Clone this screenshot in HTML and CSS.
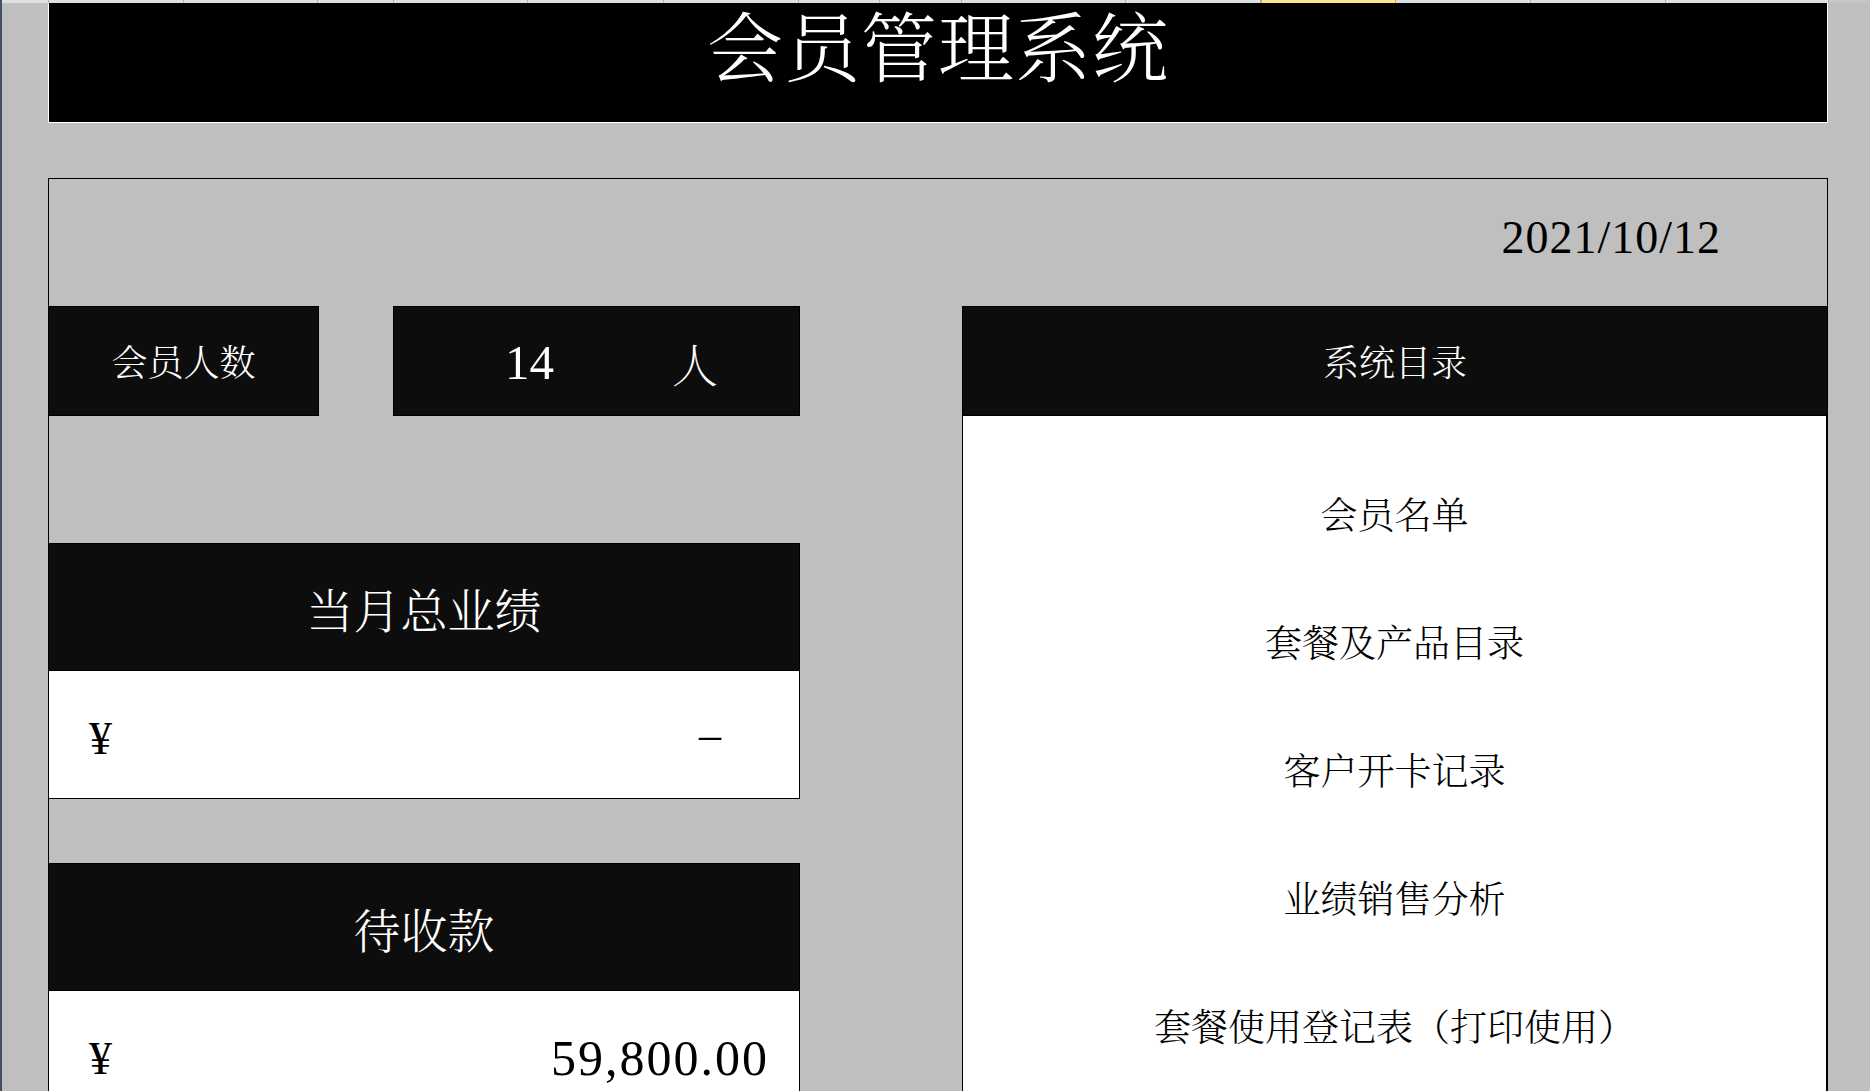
FILE: index.html
```html
<!DOCTYPE html>
<html lang="zh-CN">
<head>
    <meta charset="UTF-8">
    <title>会员管理系统</title>
    <link rel="stylesheet" href="styles.css">
</head>
<body>
<div class="sheet">
    <div class="colheads">
        <span class="c0"></span>
        <span class="c1"></span>
        <span class="c2"></span>
        <span class="c3"></span>
        <span class="c4"></span>
        <span class="c5"></span>
        <span class="c6"></span>
        <span class="c7"></span>
        <span class="c8"></span>
        <span class="c9"></span>
        <span class="c10"></span>
        <span class="c11 on"></span>
        <span class="c12"></span>
        <span class="c13"></span>
        <span class="c14"></span>
        <span class="c15"></span>
    </div>
    <div class="main">
        <div class="title">会员管理系统</div>
        <div class="board">
            <div class="date">2021/10/12</div>
            <div class="cols">
                <div class="left">
                    <div class="stats">
                        <div class="label">会员人数</div>
                        <div class="count"><span class="num">14</span><span class="unit">人</span></div>
                    </div>
                    <div class="card">
                        <div class="cardhead">当月总业绩</div>
                        <div class="cardval"><span class="yen">¥</span><span class="zero">–</span></div>
                    </div>
                    <div class="card second">
                        <div class="cardhead">待收款</div>
                        <div class="cardval"><span class="yen">¥</span><span class="money">59,800.00</span></div>
                    </div>
                </div>
                <div class="right">
                    <div class="menuhead">系统目录</div>
                    <ul class="menu">
                        <li>会员名单</li>
                        <li>套餐及产品目录</li>
                        <li>客户开卡记录</li>
                        <li>业绩销售分析</li>
                        <li>套餐使用登记表（打印使用）</li>
                    </ul>
                </div>
            </div>
        </div>
    </div>
</div>
</body>
</html>
```

FILE: styles.css
```css
* {
    box-sizing: border-box;
}

html, body {
    margin: 0;
    padding: 0;
    height: 100%;
    overflow: hidden;
}

body {
    background: #bfbfbf;
    font-family: "Liberation Serif", "Noto Serif CJK SC", "Noto Sans CJK SC", serif;
    font-weight: 300;
}

.sheet {
    height: 100%;
    border-left: 2px solid #44505f;
}

/* excel column header strip, mostly scrolled away */
.colheads {
    display: flex;
    height: 3px;
}
.colheads span {
    height: 3px;
    background: #dde1e7;
    border-right: 1px solid #a9b0ba;
}
.colheads .on {
    background: #fde58a;
    border-left: 1px solid #e3a53a;
    border-right: 1px solid #e3a53a;
}
.c0 { width: 47px; }
.c1 { width: 135px; }
.c2 { width: 134px; }
.c3 { width: 76px; }
.c4 { width: 134px; }
.c5 { width: 136px; }
.c6 { width: 135px; }
.c7 { width: 81px; }
.c8 { width: 82px; }
.c9 { width: 164px; }
.c10 { width: 135px; }
.c11 { width: 135px; }
.c12 { width: 135px; }
.c13 { width: 135px; }
.c14 { width: 163px; }
.c15 { flex-grow: 1; background: #c6c6c6 !important; border: none !important; }

.main {
    padding: 0 42px 0 46px;
}

.title {
    height: 120px;
    background: #000;
    border: 1px solid #fff;
    border-top: none;
    color: #fff;
    text-align: center;
    font-size: 76px;
    line-height: 90px;
    padding-top: 2px;
    letter-spacing: 1px;
}

.board {
    margin-top: 55px;
    border: 1px solid #000;
    border-bottom: none;
    height: 1000px;
}

.date {
    height: 127px;
    line-height: 118px;
    text-align: right;
    padding-right: 106px;
    font-size: 46px;
    letter-spacing: 1px;
    color: #000;
}

.cols {
    display: flex;
    justify-content: space-between;
    margin: 0 -1px;
}

.left {
    width: 752px;
}

.right {
    width: 866px;
}

.stats {
    display: flex;
    height: 110px;
}

.label {
    width: 271px;
    margin-right: 74px;
    background: #0d0d0d;
    border: 1px solid #000;
    color: #fff;
    font-size: 36px;
    line-height: 108px;
    padding-top: 3px;
    text-align: center;
}

.count {
    flex-grow: 1;
    display: flex;
    align-items: center;
    background: #0d0d0d;
    border: 1px solid #000;
    color: #fff;
    padding-top: 2px;
}
.count .num {
    width: 271px;
    text-align: center;
    font-size: 49px;
}
.count .unit {
    margin-left: 7px;
    font-size: 46px;
    font-weight: 200;
}

.card {
    margin-top: 127px;
}
.card.second {
    margin-top: 64px;
}

.cardhead {
    height: 128px;
    background: #0d0d0d;
    border: 1px solid #000;
    color: #fff;
    font-size: 47px;
    line-height: 126px;
    padding-top: 5px;
    text-align: center;
}

.cardval {
    height: 128px;
    display: flex;
    justify-content: space-between;
    align-items: center;
    background: #fff;
    border: 1px solid #000;
    border-top: none;
    padding: 7px 30px 0 40px;
    color: #000;
}
.cardval .yen {
    font-size: 46px;
}
.cardval .zero {
    font-size: 44px;
    margin: 0 48px 8px 0;
}
.cardval .money {
    font-size: 50px;
    letter-spacing: 2px;
}

.menuhead {
    height: 110px;
    background: #0d0d0d;
    border: 1px solid #000;
    color: #fff;
    font-size: 36px;
    line-height: 108px;
    padding-top: 3px;
    text-align: center;
}

.menu {
    list-style: none;
    margin: 0;
    padding: 37px 0 80px;
    background: #fff;
    border: 1px solid #000;
    border-top: none;
    border-right: 2px solid #000;
}
.menu li {
    height: 128px;
    line-height: 128px;
    text-align: center;
    font-size: 37px;
    color: #000;
}
```
